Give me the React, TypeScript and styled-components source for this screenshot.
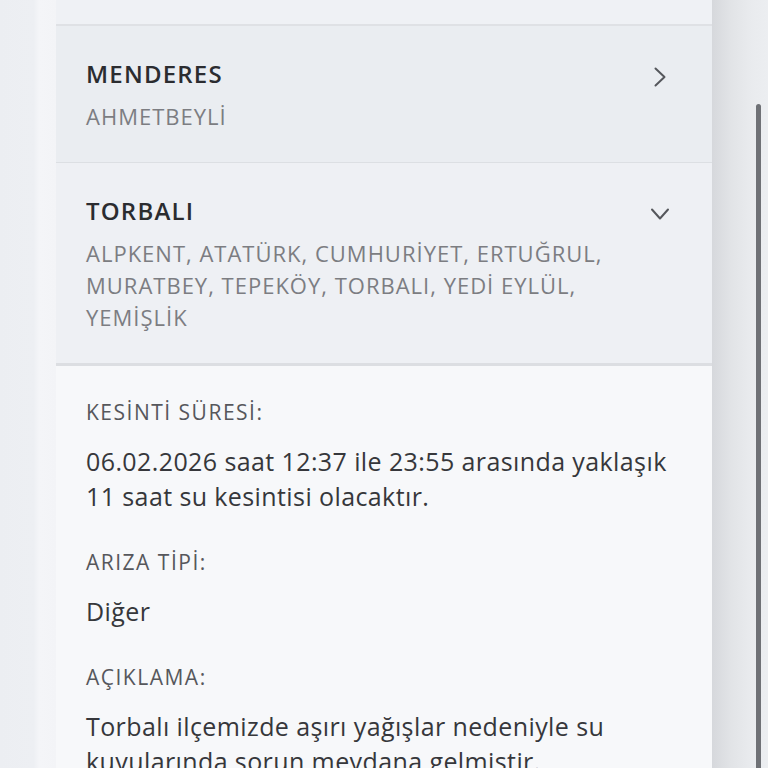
import styled, { createGlobalStyle } from "styled-components";

const GlobalStyle = createGlobalStyle`
    body {
        margin: 0;
        background-color: #eceef2;
        font-family: "Open Sans", "Noto Sans", sans-serif;
    }
`;

const PageWrap = styled.div`
    width: 768px;
    height: 768px;
    overflow: hidden;
    display: flex;
`;

const LeftGutter = styled.div`
    width: 56px;
    flex-shrink: 0;
    background: linear-gradient(90deg, #eceef2 0%, #edeff3 60%, #f4f5f8 70%, #f3f4f7 100%);
`;

const RightGutter = styled.div`
    position: relative;
    width: 56px;
    flex-shrink: 0;
    background: linear-gradient(90deg, #d6d8dc 0%, #e2e4e7 35%, #e9ebee 70%, #eceef1 100%);
`;

const ScrollThumb = styled.div`
    position: absolute;
    left: 44px;
    top: 104px;
    width: 5px;
    height: 700px;
    border-radius: 3px;
    background-color: #6f7176;
`;

const Panel = styled.div`
    width: 656px;
    flex-shrink: 0;
    display: flex;
    flex-direction: column;
`;

const TopStub = styled.div`
    flex-shrink: 0;
    height: 24px;
    background-color: #eff1f5;
    border-bottom: 2px solid #dfe1e5;
`;

const DistrictRow = styled.div<{ $open?: boolean }>`
    flex-shrink: 0;
    display: flex;
    align-items: flex-start;
    justify-content: space-between;
    padding: 32px 38px 30px 30px;
    background-color: ${(p) => (p.$open ? "#eef0f4" : "#eaedf1")};
    border-bottom: ${(p) => (p.$open ? "3px solid #dcdee2" : "1px solid #dcdfe3")};
`;

const DistrictText = styled.div`
    display: flex;
    flex-direction: column;
    gap: 10px;
`;

const DistrictName = styled.div`
    font-size: 24px;
    line-height: 32px;
    font-weight: 600;
    letter-spacing: 1.2px;
    color: #2b2c30;
`;

const Neighbourhoods = styled.div`
    font-size: 22px;
    line-height: 32px;
    letter-spacing: 1px;
    color: #7c7d82;
    max-width: 530px;
`;

const Chevron = styled.svg`
    width: 28px;
    height: 28px;
    margin-top: 5px;
    flex-shrink: 0;
`;

const Details = styled.div`
    flex: 1 0 auto;
    background-color: #f7f8fa;
    padding: 32px 30px 0 30px;
    display: flex;
    flex-direction: column;
    gap: 34px;
`;

const Field = styled.div`
    display: flex;
    flex-direction: column;
    gap: 18px;
`;

const FieldLabel = styled.div`
    font-size: 21px;
    line-height: 28px;
    font-weight: 500;
    letter-spacing: 1.5px;
    color: #56575c;
`;

const FieldValue = styled.div`
    font-size: 25px;
    line-height: 35px;
    letter-spacing: 0.4px;
    color: #36373b;
    max-width: 592px;
`;

const ChevronRight = () => (
    <Chevron viewBox="0 0 28 28" fill="none" stroke="#55575c" strokeWidth="2" strokeLinecap="round" strokeLinejoin="round">
        <path d="M9.5 5.5L18.5 14L9.5 22.5" />
    </Chevron>
);

const ChevronDown = () => (
    <Chevron viewBox="0 0 28 28" fill="none" stroke="#55575c" strokeWidth="2" strokeLinecap="round" strokeLinejoin="round">
        <path d="M6 9.5L14 18.5L22 9.5" />
    </Chevron>
);

export default function App() {
    return (
        <>
            <GlobalStyle />
            <PageWrap>
                <LeftGutter />
                <Panel>
                    <TopStub />
                    <DistrictRow>
                        <DistrictText>
                            <DistrictName>MENDERES</DistrictName>
                            <Neighbourhoods>AHMETBEYLİ</Neighbourhoods>
                        </DistrictText>
                        <ChevronRight />
                    </DistrictRow>
                    <DistrictRow $open>
                        <DistrictText>
                            <DistrictName>TORBALI</DistrictName>
                            <Neighbourhoods>
                                ALPKENT, ATATÜRK, CUMHURİYET, ERTUĞRUL, MURATBEY, TEPEKÖY, TORBALI, YEDİ EYLÜL, YEMİŞLİK
                            </Neighbourhoods>
                        </DistrictText>
                        <ChevronDown />
                    </DistrictRow>
                    <Details>
                        <Field>
                            <FieldLabel>KESİNTİ SÜRESİ:</FieldLabel>
                            <FieldValue>06.02.2026 saat 12:37 ile 23:55 arasında yaklaşık 11 saat su kesintisi olacaktır.</FieldValue>
                        </Field>
                        <Field>
                            <FieldLabel>ARIZA TİPİ:</FieldLabel>
                            <FieldValue>Diğer</FieldValue>
                        </Field>
                        <Field>
                            <FieldLabel>AÇIKLAMA:</FieldLabel>
                            <FieldValue>Torbalı ilçemizde aşırı yağışlar nedeniyle su kuyularında sorun meydana gelmiştir.</FieldValue>
                        </Field>
                    </Details>
                </Panel>
                <RightGutter>
                    <ScrollThumb />
                </RightGutter>
            </PageWrap>
        </>
    );
}
